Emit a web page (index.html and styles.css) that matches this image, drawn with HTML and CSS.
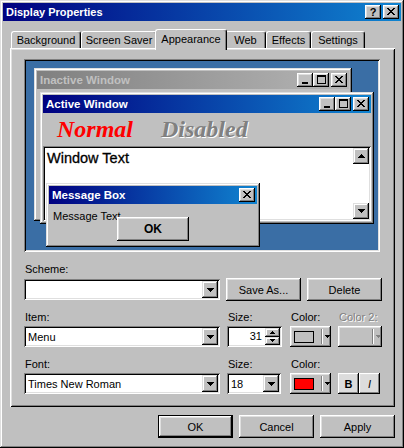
FILE: index.html
```html
<!DOCTYPE html>
<html>
<head>
<meta charset="utf-8">
<link rel="stylesheet" href="styles.css">
</head>
<body>
<div class="window">
  <div class="titlebar">
    <span class="title">Display Properties</span>
    <div class="tbtns">
      <div class="cbtn help">?</div>
      <div class="cbtn"><svg class="g" width="8" height="7" viewBox="0 0 8 7"><path d="M0 0h2v1H0zM6 0h2v1H6zM1 1h2v1H1zM5 1h2v1H5zM2 2h4v1H2zM3 3h2v1H3zM2 4h4v1H2zM1 5h2v1H1zM5 5h2v1H5zM0 6h2v1H0zM6 6h2v1H6z"/></svg></div>
    </div>
  </div>
  <div class="body">
    <div class="tabs">
      <div class="tab w-bg">Background</div>
      <div class="tab w-ss">Screen Saver</div>
      <div class="tab sel w-ap">Appearance</div>
      <div class="tab w-web">Web</div>
      <div class="tab w-ef">Effects</div>
      <div class="tab w-set">Settings</div>
    </div>
    <div class="panel">
      <div class="preview">
        <div class="pwin inactive">
          <div class="cap cap-inactive">
            <span class="ct">Inactive Window</span>
            <div class="cbtns">
              <div class="cbtn"><svg class="g min" width="6" height="2" viewBox="0 0 6 2"><path d="M0 0h6v2H0z"/></svg></div>
              <div class="cbtn"><svg class="g" width="9" height="9" viewBox="0 0 9 9"><path d="M0 0h9v2H0zM0 2h1v7H0zM8 2h1v7H8zM1 8h7v1H1z"/></svg></div>
              <div class="cbtn close"><svg class="g" width="8" height="7" viewBox="0 0 8 7"><path d="M0 0h2v1H0zM6 0h2v1H6zM1 1h2v1H1zM5 1h2v1H5zM2 2h4v1H2zM3 3h2v1H3zM2 4h4v1H2zM1 5h2v1H1zM5 5h2v1H5zM0 6h2v1H0zM6 6h2v1H6z"/></svg></div>
            </div>
          </div>
        </div>
        <div class="pwin active">
          <div class="cap cap-active">
            <span class="ct">Active Window</span>
            <div class="cbtns">
              <div class="cbtn"><svg class="g min" width="6" height="2" viewBox="0 0 6 2"><path d="M0 0h6v2H0z"/></svg></div>
              <div class="cbtn"><svg class="g" width="9" height="9" viewBox="0 0 9 9"><path d="M0 0h9v2H0zM0 2h1v7H0zM8 2h1v7H8zM1 8h7v1H1z"/></svg></div>
              <div class="cbtn close"><svg class="g" width="8" height="7" viewBox="0 0 8 7"><path d="M0 0h2v1H0zM6 0h2v1H6zM1 1h2v1H1zM5 1h2v1H5zM2 2h4v1H2zM3 3h2v1H3zM2 4h4v1H2zM1 5h2v1H1zM5 5h2v1H5zM0 6h2v1H0zM6 6h2v1H6z"/></svg></div>
            </div>
          </div>
          <div class="menurow">
            <span class="normal">Normal</span>
            <span class="disabled">Disabled</span>
          </div>
          <div class="client">
            <div class="wtext">Window Text</div>
            <div class="sbar">
              <div class="sbtn"><svg class="g" width="7" height="4" viewBox="0 0 7 4"><path d="M3 0h1v1H3zM2 1h3v1H2zM1 2h5v1H1zM0 3h7v1H0z"/></svg></div>
              <div class="sbtn"><svg class="g" width="7" height="4" viewBox="0 0 7 4"><path d="M0 0h7v1H0zM1 1h5v1H1zM2 2h3v1H2zM3 3h1v1H3z"/></svg></div>
            </div>
          </div>
        </div>
        <div class="pwin msg">
          <div class="cap cap-active">
            <span class="ct">Message Box</span>
            <div class="cbtns">
              <div class="cbtn"><svg class="g" width="8" height="7" viewBox="0 0 8 7"><path d="M0 0h2v1H0zM6 0h2v1H6zM1 1h2v1H1zM5 1h2v1H5zM2 2h4v1H2zM3 3h2v1H3zM2 4h4v1H2zM1 5h2v1H1zM5 5h2v1H5zM0 6h2v1H0zM6 6h2v1H6z"/></svg></div>
            </div>
          </div>
          <div class="msgtext">Message Text</div>
          <div class="btn msgok">OK</div>
        </div>
      </div>

      <div class="form">
        <div class="lbl">Scheme:</div>
        <div class="scheme-row">
          <div class="combo c-wide"><span class="val"></span><div class="dd"><svg class="g" width="7" height="4" viewBox="0 0 7 4"><path d="M0 0h7v1H0zM1 1h5v1H1zM2 2h3v1H2zM3 3h1v1H3z"/></svg></div></div>
          <div class="btn push">Save As...</div>
          <div class="btn push">Delete</div>
        </div>

        <div class="grid labels">
          <div class="lbl">Item:</div>
          <div class="lbl">Size:</div>
          <div class="lbl">Color:</div>
          <div class="lbl dis">Color 2:</div>
        </div>
        <div class="grid ctrls">
          <div class="combo"><span class="val">Menu</span><div class="dd"><svg class="g" width="7" height="4" viewBox="0 0 7 4"><path d="M0 0h7v1H0zM1 1h5v1H1zM2 2h3v1H2zM3 3h1v1H3z"/></svg></div></div>
          <div class="spin"><span class="val">31</span>
            <div class="spinbtns">
              <div class="spb"><svg class="g" width="5" height="3" viewBox="0 0 5 3"><path d="M2 0h1v1H2zM1 1h3v1H1zM0 2h5v1H0z"/></svg></div>
              <div class="spb"><svg class="g" width="5" height="3" viewBox="0 0 5 3"><path d="M0 0h5v1H0zM1 1h3v1H1zM2 2h1v1H2z"/></svg></div>
            </div>
          </div>
          <div class="btn colorbtn"><span class="swatch sw-menu"></span><span class="sep"></span><svg class="g" width="5" height="3" viewBox="0 0 5 3"><path d="M0 0h5v1H0zM1 1h3v1H1zM2 2h1v1H2z"/></svg></div>
          <div class="btn colorbtn c2 disabledbtn"><span class="swatch sw-none"></span><span class="sep"></span><svg class="g gdis" width="5" height="3" viewBox="0 0 5 3"><path d="M0 0h5v1H0zM1 1h3v1H1zM2 2h1v1H2z"/></svg></div>
        </div>

        <div class="grid labels l2">
          <div class="lbl">Font:</div>
          <div class="lbl">Size:</div>
          <div class="lbl">Color:</div>
          <div></div>
        </div>
        <div class="grid ctrls r2">
          <div class="combo"><span class="val">Times New Roman</span><div class="dd"><svg class="g" width="7" height="4" viewBox="0 0 7 4"><path d="M0 0h7v1H0zM1 1h5v1H1zM2 2h3v1H2zM3 3h1v1H3z"/></svg></div></div>
          <div class="combo c-size"><span class="val">18</span><div class="dd"><svg class="g" width="7" height="4" viewBox="0 0 7 4"><path d="M0 0h7v1H0zM1 1h5v1H1zM2 2h3v1H2zM3 3h1v1H3z"/></svg></div></div>
          <div class="btn colorbtn"><span class="swatch sw-red"></span><span class="sep"></span><svg class="g" width="5" height="3" viewBox="0 0 5 3"><path d="M0 0h5v1H0zM1 1h3v1H1zM2 2h1v1H2z"/></svg></div>
          <div class="bi">
            <div class="btn tog bold">B</div>
            <div class="btn tog ital">I</div>
          </div>
        </div>
      </div>
    </div>
    <div class="actions">
      <div class="btn push default">OK</div>
      <div class="btn push">Cancel</div>
      <div class="btn push">Apply</div>
    </div>
  </div>
</div>
</body>
</html>
```

FILE: styles.css
```css
* { box-sizing: border-box; margin: 0; padding: 0; }
html, body { width: 404px; height: 448px; overflow: hidden; }
body {
  background: #c0c0c0;
  font-family: "Liberation Sans", Arial, sans-serif;
  font-size: 11px;
  color: #000;
}
.g { display: block; fill: #000; shape-rendering: crispEdges; }

.window {
  width: 404px;
  height: 448px;
  padding: 3px;
  background: #c0c0c0;
  box-shadow: inset -1px -1px #000, inset 1px 1px #dfdfdf, inset -2px -2px #808080, inset 2px 2px #fff;
  display: flex;
  flex-direction: column;
}
.titlebar {
  height: 18px;
  display: flex;
  align-items: center;
  padding: 0 2px 0 3px;
  background: linear-gradient(to right, #000080, #1084d0);
  color: #fff;
  font-weight: bold;
  font-size: 11px;
}
.title { flex: 1; }
.tbtns { display: flex; gap: 2px; }
.cbtn {
  width: 16px;
  height: 14px;
  background: #c0c0c0;
  color: #000;
  box-shadow: inset -1px -1px #000, inset 1px 1px #fff, inset -2px -2px #808080, inset 2px 2px #dfdfdf;
  display: flex;
  align-items: center;
  justify-content: center;
  padding-bottom: 1px;
}
.cbtn.help { font-size: 11px; font-weight: bold; line-height: 12px; }
.cbtn .min { margin-top: 6px; margin-right: 1px; }

.body {
  flex: 1;
  display: flex;
  flex-direction: column;
  padding: 8px 6px 0 7px;
}
.tabs {
  display: flex;
  align-items: flex-end;
  height: 19px;
  padding-left: 1px;
}
.tab {
  height: 17px;
  background: #c0c0c0;
  border-top: 1px solid #fff;
  border-left: 1px solid #fff;
  border-right: 1px solid #000;
  border-radius: 3px 3px 0 0;
  box-shadow: inset -1px 0 #808080;
  text-align: center;
  line-height: 17px;
  white-space: nowrap;
}
.tab.sel {
  height: 21px;
  margin: 0 -2px -2px;
  position: relative;
  z-index: 1;
  line-height: 18px;
}
.w-bg { width: 70px; }
.w-ss { width: 76px; }
.w-ap { width: 72px; }
.w-web { width: 41px; }
.w-ef { width: 45px; }
.w-set { width: 54px; }

.panel {
  width: 385px;
  height: 359px;
  padding: 11px 12px 0 14px;
  background: #c0c0c0;
  box-shadow: inset 1px 1px #fff, inset -1px -1px #000, inset 2px 2px #dfdfdf, inset -2px -2px #808080;
}

.preview {
  position: relative;
  width: 356px;
  height: 193px;
  background: #3a6ea5;
  box-shadow: inset 1px 1px #808080, inset -1px -1px #fff, inset 2px 2px #000, inset -2px -2px #dfdfdf;
  overflow: hidden;
}
.pwin {
  position: absolute;
  background: #c0c0c0;
  padding: 3px;
  box-shadow: inset -1px -1px #000, inset 1px 1px #dfdfdf, inset -2px -2px #808080, inset 2px 2px #fff;
  display: flex;
  flex-direction: column;
}
.pwin.inactive { left: 10px; top: 9px; width: 318px; height: 153px; }
.pwin.active { left: 16px; top: 33px; width: 334px; height: 132px; }
.pwin.msg { left: 22px; top: 124px; width: 214px; height: 64px; }

.cap {
  height: 18px;
  flex: none;
  display: flex;
  align-items: center;
  padding: 0 2px 0 3px;
  font-weight: bold;
  font-size: 11.5px;
  white-space: nowrap;
}
.cap-active { background: linear-gradient(to right, #000080, #1084d0); color: #fff; }
.cap-inactive { background: linear-gradient(to right, #808080, #b5b5b5); color: #c0c0c0; }
.ct { flex: 1; overflow: hidden; }
.cbtns { display: flex; }
.cbtns .close { margin-left: 2px; }

.menurow {
  height: 33px;
  flex: none;
  display: flex;
  align-items: center;
  gap: 28px;
  padding-left: 14px;
  font-family: "Liberation Serif", "Times New Roman", serif;
  font-weight: bold;
  font-style: italic;
  font-size: 24px;
}
.normal { color: #ff0000; }
.disabled { color: #808080; text-shadow: 1px 1px #fff; }

.client {
  flex: 1;
  display: flex;
  padding: 2px;
  background: #fff;
  box-shadow: inset 1px 1px #808080, inset -1px -1px #fff, inset 2px 2px #000, inset -2px -2px #dfdfdf;
}
.wtext {
  flex: 1;
  font-size: 14.5px;
  padding: 2px 0 0 2px;
  -webkit-text-stroke: 0.3px #000;
}
.sbar {
  width: 16px;
  display: flex;
  flex-direction: column;
  justify-content: space-between;
  background: #fff;
}
.sbtn {
  width: 16px;
  height: 16px;
  background: #c0c0c0;
  box-shadow: inset -1px -1px #000, inset 1px 1px #dfdfdf, inset -2px -2px #808080, inset 2px 2px #fff;
  display: flex;
  align-items: center;
  justify-content: center;
}

.msgtext { padding: 6px 0 0 4px; line-height: 13px; }
.btn {
  background: #c0c0c0;
  box-shadow: inset -1px -1px #000, inset 1px 1px #fff, inset -2px -2px #808080, inset 2px 2px #dfdfdf;
  display: flex;
  align-items: center;
  justify-content: center;
}
.msgok {
  position: absolute;
  left: 71px;
  top: 34px;
  width: 72px;
  height: 24px;
  font-weight: bold;
  font-size: 12px;
}

.form { margin-top: 11px; }
.lbl { height: 13px; line-height: 13px; padding-left: 1px; white-space: nowrap; }
.lbl.dis { color: #808080; text-shadow: 1px 1px #fff; }
.scheme-row {
  margin-top: 2px;
  height: 23px;
  display: flex;
  align-items: center;
  gap: 6px;
}
.push { width: 75px; height: 23px; }
.grid {
  display: grid;
  grid-template-columns: 196px 56px 41px 44px;
  column-gap: 7px;
}
.labels { margin-top: 10px; }
.labels.l2 { margin-top: 11px; }
.ctrls { margin-top: 2px; height: 21px; align-items: stretch; }
.ctrls.r2 { margin-top: 2px; }

.combo {
  height: 21px;
  display: flex;
  align-items: center;
  padding: 2px;
  background: #fff;
  box-shadow: inset 1px 1px #808080, inset -1px -1px #fff, inset 2px 2px #000, inset -2px -2px #dfdfdf;
}
.c-wide { width: 196px; }
.c-size { width: 54px; }
.combo .val { flex: 1; padding-left: 2px; white-space: nowrap; overflow: hidden; }
.dd {
  width: 16px;
  height: 17px;
  background: #c0c0c0;
  box-shadow: inset -1px -1px #000, inset 1px 1px #dfdfdf, inset -2px -2px #808080, inset 2px 2px #fff;
  display: flex;
  align-items: center;
  justify-content: center;
}

.spin {
  width: 55px;
  height: 21px;
  display: flex;
  padding: 2px;
  background: #fff;
  box-shadow: inset 1px 1px #808080, inset -1px -1px #fff, inset 2px 2px #000, inset -2px -2px #dfdfdf;
}
.spin .val { flex: 1; text-align: right; padding-right: 3px; line-height: 17px; }
.spinbtns { width: 15px; display: flex; flex-direction: column; }
.spb {
  flex: 1;
  background: #c0c0c0;
  box-shadow: inset -1px -1px #000, inset 1px 1px #dfdfdf, inset -2px -2px #808080, inset 2px 2px #fff;
  display: flex;
  align-items: center;
  justify-content: center;
}

.colorbtn {
  width: 41px;
  height: 21px;
  justify-content: flex-start;
  padding-left: 4px;
}
.colorbtn.c2 { width: 44px; }
.swatch {
  width: 20px;
  height: 12px;
  border: 1px solid #000;
  margin-right: 7px;
}
.sw-menu { background: #c0c0c0; }
.sw-red { background: #ff0000; }
.sw-none { border-color: transparent; margin-right: 10px; }
.sep {
  width: 2px;
  height: 15px;
  border-left: 1px solid #808080;
  border-right: 1px solid #fff;
  margin-right: 2px;
}
.gdis { fill: #808080; }

.bi { display: flex; }
.tog {
  width: 21px;
  height: 21px;
  background: #dcdcdc;
  font-size: 11px;
}
.tog.bold { font-weight: bold; }
.tog.ital { font-style: italic; }

.actions {
  margin-top: 8px;
  display: flex;
  justify-content: flex-end;
  gap: 6px;
}
.push.default {
  box-shadow: inset 0 0 0 1px #000, inset -2px -2px #000, inset 2px 2px #fff, inset -3px -3px #808080, inset 3px 3px #dfdfdf;
}
```
